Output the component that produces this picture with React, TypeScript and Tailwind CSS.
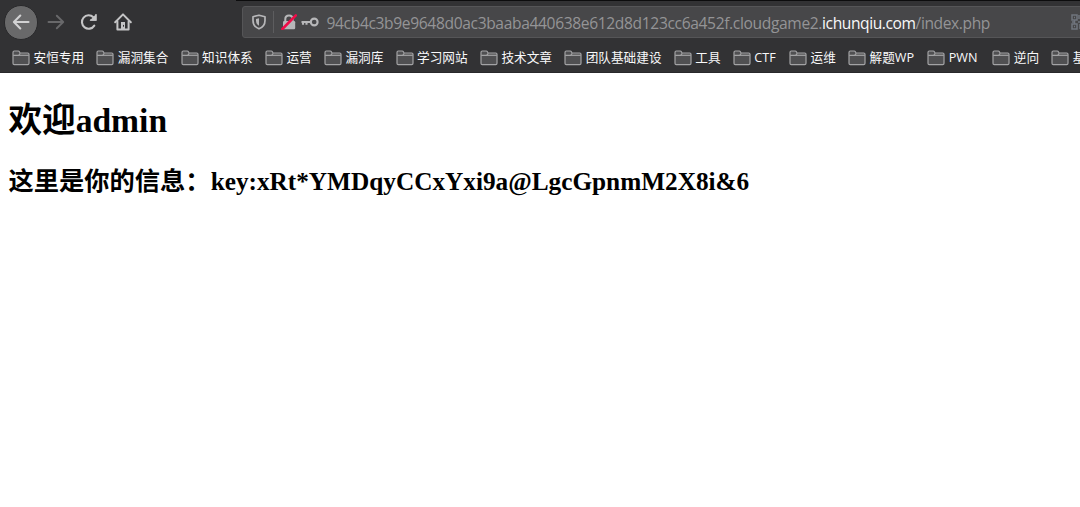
const bookmarks = [
  { label: '安恒专用', width: 'w-[84.3px]' },
  { label: '漏洞集合', width: 'w-[84.3px]' },
  { label: '知识体系', width: 'w-[84.3px]' },
  { label: '运营', width: 'w-[59px]' },
  { label: '漏洞库', width: 'w-[71.7px]' },
  { label: '学习网站', width: 'w-[84.3px]' },
  { label: '技术文章', width: 'w-[84.3px]' },
  { label: '团队基础建设', width: 'w-[109.6px]' },
  { label: '工具', width: 'w-[59px]' },
  { label: 'CTF', width: 'w-[56.3px]' },
  { label: '运维', width: 'w-[59px]' },
  { label: '解题WP', width: 'w-[79.2px]' },
  { label: 'PWN', width: 'w-[65px]' },
  { label: '逆向', width: 'w-[59px]' },
  { label: '基', width: 'w-[59px]' },
];

function FolderIcon() {
  return (
    <svg className="h-4 w-[18px] shrink-0" viewBox="0 0 18 16" fill="none" stroke="#a3a3a5" strokeWidth="1.2">
      <path d="M1 13.2V2.4Q1 1 2.3 1H6.2Q7 1 7.4 1.8L8 3H15.7Q17 3 17 4.3V13.2Q17 14.6 15.7 14.6H2.3Q1 14.6 1 13.2Z" fill="#505052" />
      <path d="M1.2 5.3H6.6L8.3 3.4" />
      <path d="M7 5.3H16.8" />
    </svg>
  );
}

function BackIcon() {
  return (
    <svg className="h-[18px] w-[18px]" viewBox="0 0 18 18" fill="none" stroke="#d2d2d3" strokeWidth="2.1" strokeLinecap="round" strokeLinejoin="round">
      <path d="M16.5 9H2M8.3 2.6L1.9 9L8.3 15.4" />
    </svg>
  );
}

function ForwardIcon() {
  return (
    <svg className="h-[18px] w-[18px]" viewBox="0 0 18 18" fill="none" stroke="#68686a" strokeWidth="1.9" strokeLinecap="round" strokeLinejoin="round">
      <path d="M1.5 9H16M9.8 2.7L16.2 9L9.8 15.3" />
    </svg>
  );
}

function ReloadIcon() {
  return (
    <svg className="h-[18px] w-[18px]" viewBox="0 0 18 18" fill="none" stroke="#c5c5c6" strokeWidth="2.1" strokeLinecap="round">
      <path d="M14.3 12.6A6.7 6.7 0 1 1 13.4 4.3" />
      <path d="M16.2 1V7.7H9.5Z" fill="#c5c5c6" stroke="none" />
      <path d="M16 1.8V6.9H10.8" strokeWidth="1.5" />
    </svg>
  );
}

function HomeIcon() {
  return (
    <svg className="h-[18px] w-[18px]" viewBox="0 0 18 18" fill="none" stroke="#c5c5c6" strokeWidth="2" strokeLinecap="round" strokeLinejoin="round">
      <path d="M1.2 9.2L9 1.4L16.8 9.2" />
      <path d="M3.4 8.5V16.4H14.6V8.5" />
      <path d="M7 9H11V16H7Z" fill="#c5c5c6" stroke="none" />
      <path d="M9.5 12.3V13.3" stroke="#323234" strokeWidth="1" />
    </svg>
  );
}

function ShieldIcon() {
  return (
    <svg className="h-4 w-[14px]" viewBox="0 0 14 16" fill="none" stroke="#b7b7b9" strokeWidth="1.7" strokeLinejoin="round">
      <path d="M7 1.2L13 2.7V6.5C13 10.8 10.7 13.4 7 14.8C3.3 13.4 1 10.8 1 6.5V2.7Z" />
      <path d="M7 4.2V11.8C5 10.6 4 9 4 6.7V4.9Z" fill="#b7b7b9" stroke="none" />
    </svg>
  );
}

function InsecureIcon() {
  return (
    <svg className="h-4 w-4" viewBox="0 0 16 16" fill="none">
      <path d="M4.3 8V5Q4.3 1.5 8 1.5Q11.7 1.5 11.7 5V8" stroke="#b7b7b9" strokeWidth="2" />
      <rect x="2" y="7" width="12.2" height="8.3" rx="1.2" fill="#b7b7b9" />
      <path d="M1.4 15L14.8 1.4" stroke="#f00c48" strokeWidth="2.6" strokeLinecap="round" />
    </svg>
  );
}

function KeyIcon() {
  return (
    <svg className="h-[10px] w-[18px]" viewBox="0 0 18 10" fill="none" stroke="#b7b7b9" strokeWidth="2.1">
      <circle cx="13.2" cy="5" r="3.4" />
      <path d="M.5 5H9.8M2 5V7.7M5.5 5V7.7" />
    </svg>
  );
}

function QrIcon() {
  return (
    <svg className="h-4 w-4 shrink-0" viewBox="0 0 16 16" fill="none" stroke="#70757e" strokeWidth="1.5">
      <path d="M1 1H6V6H1ZM1 10H6V15H1ZM10 1H15V6H10Z" />
      <path d="M3 3.5H4M3 12.5H4M8 1V5M7 8H15M1 8H4M9 10V15M12 11H15V14M3.5 6V10" />
    </svg>
  );
}

export default function App() {
  return (
    <div className="flex h-[507px] w-full flex-col overflow-hidden bg-white">
      <header className="flex h-[73px] shrink-0 flex-col border-b border-[#29292b] bg-[#323234]">
        <div className="ml-[236px] h-px shrink-0 bg-[#0c0c0d]" />
        <div className="flex h-[42px] shrink-0 items-center pl-1">
          <div className="flex h-[35px] w-[34px] shrink-0 items-center justify-center rounded-full border border-[#29292b] bg-[#69696a]">
            <BackIcon />
          </div>
          <div className="ml-[8.5px] flex w-[195.5px] shrink-0 items-center gap-[15.8px]">
            <ForwardIcon />
            <ReloadIcon />
            <HomeIcon />
          </div>
          <div className="flex h-8 w-[900px] shrink-0 items-center rounded-[3px] border border-[#555557] bg-[#474749]">
            <div className="flex h-full w-[83.5px] shrink-0 items-center pl-[9px]">
              <ShieldIcon />
              <div className="ml-[7px] h-[22px] w-px bg-[#5d5d5f]" />
              <div className="ml-[7px]"><InsecureIcon /></div>
              <div className="ml-[4px]"><KeyIcon /></div>
            </div>
            <div className="flex w-[744.5px] shrink-0 whitespace-pre pt-px font-['Open_Sans','Noto_Sans',sans-serif] text-[15.6px] leading-6 text-[#949496]">
              <span className="tracking-[-0.36px]">94cb4c3b9e9648d0ac3baaba440638e612d8d123cc6a452f.cloudgame2.</span>
              <span className="tracking-[-0.42px] text-[#f9f9fa]">ichunqiu.com</span>
              <span className="tracking-[-0.4px]">/index.php</span>
            </div>
            <QrIcon />
          </div>
        </div>
        <nav className="flex h-[29px] shrink-0 items-center overflow-hidden pl-3 font-['Open_Sans','Noto_Sans_CJK_SC',sans-serif] text-[12.65px] leading-5 text-[#f9f9fa]">
          {bookmarks.map(({ label, width }) => (
            <div key={label} className={`flex shrink-0 items-center gap-[3.5px] whitespace-nowrap ${width}`}>
              <FolderIcon />
              <span className="pb-0.5">{label}</span>
            </div>
          ))}
        </nav>
      </header>
      <main className="flex flex-col pl-[8.5px] pt-[23px] font-['Liberation_Serif','Noto_Sans_CJK_SC',serif] font-bold text-black">
        <h1 className="h-[50px] whitespace-nowrap text-[33.6px] leading-[50px]">欢迎admin</h1>
        <h2 className="mt-[16px] h-[38px] whitespace-nowrap text-[25.27px] leading-[38px]">这里是你的信息：key:xRt*YMDqyCCxYxi9a@LgcGpnmM2X8i&amp;6</h2>
      </main>
    </div>
  );
}
